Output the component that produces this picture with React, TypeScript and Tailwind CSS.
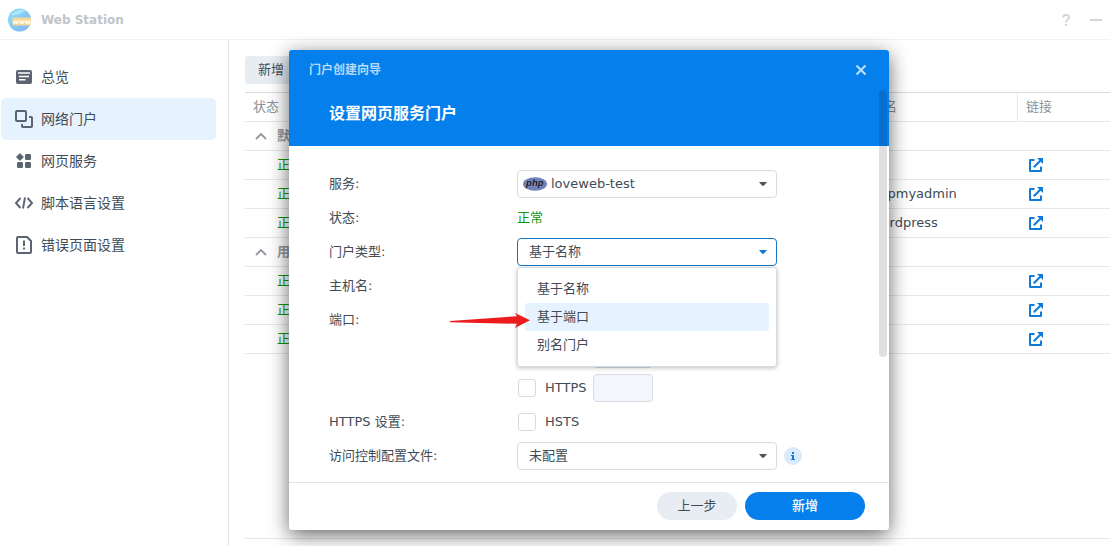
import { useState, type ReactNode } from "react";

type NavItem = { label: string; icon: ReactNode };

const navItems: NavItem[] = [
  { label: "总览", icon: <OverviewIcon /> },
  { label: "网络门户", icon: <PortalIcon /> },
  { label: "网页服务", icon: <ServiceIcon /> },
  { label: "脚本语言设置", icon: <ScriptIcon /> },
  { label: "错误页面设置", icon: <ErrorPageIcon /> },
];

const groups = [
  { name: "默认门户", aliases: ["", "phpmyadmin", "wordpress"] },
  { name: "用户自定义", aliases: ["", "", ""] },
];

const portalTypes = ["基于名称", "基于端口", "别名门户"];

function OverviewIcon() {
  return (
    <svg viewBox="0 0 20 20" className="size-5 shrink-0">
      <rect x="2" y="3" width="16" height="14" rx="2" fill="#5b6470" />
      <path d="M4 6h12M5 9.5h10M5 12.8h6.5" stroke="#fff" strokeWidth="1.4" />
    </svg>
  );
}

function PortalIcon() {
  return (
    <svg viewBox="0 0 20 20" className="size-5 shrink-0" fill="none" stroke="#5b6470" strokeWidth="2">
      <rect x="2" y="2" width="10" height="10" rx="1" />
      <path d="M15 8h2.2a.8.8 0 0 1 .8.8v8.4a.8.8 0 0 1-.8.8H8.8a.8.8 0 0 1-.8-.8V15" />
    </svg>
  );
}

function ServiceIcon() {
  return (
    <svg viewBox="0 0 20 20" className="size-5 shrink-0" fill="#5b6470">
      <path d="M6 2.8 9 6 6 9.2 2.8 6z" stroke="#5b6470" strokeWidth="1.2" strokeLinejoin="round" />
      <rect x="11" y="3" width="6" height="6" rx="1.2" />
      <rect x="3" y="11" width="6" height="6" rx="1.2" />
      <rect x="11" y="11" width="6" height="6" rx="1.2" />
    </svg>
  );
}

function ScriptIcon() {
  return (
    <svg viewBox="0 0 20 20" className="size-5 shrink-0" fill="none" stroke="#5b6470" strokeWidth="1.9">
      <path d="M6.5 5 2 10l4.500 5M13.500 5 18 10l-4.500 5M11 4.500 9 15.500" />
    </svg>
  );
}

function ErrorPageIcon() {
  return (
    <svg viewBox="0 0 20 20" className="size-5 shrink-0" fill="none" stroke="#5b6470" strokeWidth="2">
      <path d="M4 2h9l4 4v11a1 1 0 0 1-1 1H4a1 1 0 0 1-1-1V3a1 1 0 0 1 1-1z" />
      <path d="M10 5.500v5.500M10 12.500v2" />
    </svg>
  );
}

function LaunchIcon() {
  return (
    <svg viewBox="0 0 14 14" className="size-3.5" fill="none" stroke="#0f7ada" strokeWidth="2">
      <path d="M5.500 2H1v11h11V8.500" strokeLinejoin="round" />
      <path d="M4.800 9.200 11.500 2.500" />
      <path d="M8 0h6v6l-2-2-2.200-2.200z" fill="#0f7ada" stroke="none" />
    </svg>
  );
}

function AppLogo() {
  return (
    <svg viewBox="0 0 24 24" className="size-6">
      <defs>
        <linearGradient id="globe" x1="0" y1="0" x2="1" y2="1">
          <stop offset="0" stopColor="#8fe0fa" />
          <stop offset="1" stopColor="#7fb2ec" />
        </linearGradient>
      </defs>
      <circle cx="11.500" cy="12" r="11.500" fill="url(#globe)" />
      <path d="M3 7C6 3 12 1 17 2.500 13 6 8 8 3 7z" fill="#b3ecfc" opacity=".8" />
      <rect x="4.500" y="9.500" width="18.500" height="8" rx="1" fill="#f3d79b" />
      <text x="13.800" y="16" textAnchor="middle" fontSize="6.500" fontWeight="bold" fontFamily="DejaVu Sans" fill="#fff">
        www
      </text>
    </svg>
  );
}

function PhpLogo() {
  return (
    <svg viewBox="0 0 24 14" className="h-3.5 w-6">
      <ellipse cx="12" cy="7" rx="12" ry="6.800" fill="#6f7fb8" />
      <text x="11.800" y="9.200" textAnchor="middle" fontSize="9.500" fontStyle="italic" fontWeight="bold" fontFamily="Liberation Sans" fill="#14161f" stroke="#a3adce" strokeWidth=".6" paintOrder="stroke">
        php
      </text>
    </svg>
  );
}

function Caret({ active = false }: { active?: boolean }) {
  return (
    <svg viewBox="0 0 8 4" className={`pointer-events-none absolute right-2.5 top-3 h-1 w-2 ${active ? "fill-[#0f7ada]" : "fill-[#4d5660]"}`}>
      <path d="M0 0h8L5 3.500Q4 4.300 3 3.500z" />
    </svg>
  );
}

function Field({ label, htmlFor, children }: { label: string; htmlFor?: string; children?: ReactNode }) {
  return (
    <div className="flex h-7 items-center">
      <label htmlFor={htmlFor} className="w-[188px] shrink-0">
        {label}
      </label>
      {children}
    </div>
  );
}

const selectClass = "h-7 w-full appearance-none rounded border bg-white text-[#414b55] outline-none";
const portClass = "h-7 w-[60px] rounded border border-[#d3dce2] bg-[#f4f6fb] px-2";
const checkClass = "ml-px size-[18px] shrink-0 appearance-none rounded-[3px] border border-[#d3dce2] bg-white";

function PortalWizard() {
  const [type, setType] = useState("基于名称");
  return (
    <section
      role="dialog"
      aria-labelledby="wizard-title"
      className="absolute left-[289px] top-[50px] w-[600px] max-w-full rounded-[3px] bg-white shadow-[0_5px_20px_rgba(0,0,0,0.6)]"
    >
      <header className="rounded-t-[3px] bg-[#057feb] pb-4 text-white">
        <div className="flex h-10 items-center justify-between pl-5 pr-[22px]">
          <h2 id="wizard-title" className="text-xs font-bold text-[#b4d9fa]">
            门户创建向导
          </h2>
          <button type="button" aria-label="关闭" className="flex size-3 items-center justify-center">
            <svg viewBox="0 0 12 12" className="size-3" stroke="#b9dcfa" strokeWidth="2.200">
              <path d="M1.500 1.500l9 9M10.500 1.500l-9 9" />
            </svg>
          </button>
        </div>
        <h3 className="h-10 pl-10 text-base font-bold leading-[48px]">设置网页服务门户</h3>
      </header>

      <form className="flex flex-col gap-1.5 px-10 pb-3 pt-6">
        <Field label="服务:" htmlFor="service">
          <div className="relative w-[260px]">
            <select id="service" className={`${selectClass} border-[#d3dce2] pl-[33px]`}>
              <option>loveweb-test</option>
            </select>
            <span className="pointer-events-none absolute left-1.5 top-[7px]">
              <PhpLogo />
            </span>
            <Caret />
          </div>
        </Field>
        <Field label="状态:">
          <span className="text-[#0c980c]">正常</span>
        </Field>
        <Field label="门户类型:" htmlFor="portal-type">
          <div className="relative w-[260px]">
            <select id="portal-type" value={type} onChange={(e) => setType(e.target.value)} className={`${selectClass} border-[#1677c8] pl-[11px]`}>
              {portalTypes.map((t) => (
                <option key={t}>{t}</option>
              ))}
            </select>
            <Caret active />
            <ul role="listbox" aria-label="门户类型" className="absolute inset-x-0 top-[29px] z-10 rounded-[3px] border border-[#d3dce2] bg-white p-[7px] shadow-[0_1px_4px_rgba(0,0,0,0.25)]">
              {portalTypes.map((t) => (
                <li key={t} role="option" aria-selected={t === type}>
                  <button
                    type="button"
                    onClick={() => setType(t)}
                    className={`block h-7 w-full rounded-[3px] pl-3 text-left ${t === "基于端口" ? "bg-[#e6f2fe]" : "bg-white"}`}
                  >
                    {t}
                  </button>
                </li>
              ))}
            </ul>
          </div>
        </Field>
        <Field label="主机名:" htmlFor="host">
          <input id="host" className="h-7 w-[260px] rounded border border-[#d3dce2] px-3" />
        </Field>
        <Field label="端口:" htmlFor="default-port">
          <input id="default-port" type="checkbox" defaultChecked className={checkClass} />
        </Field>
        <div className="flex h-7 items-center gap-[57px] pl-[188px]">
          <input aria-label="HTTP" type="checkbox" className={checkClass} />
          <input aria-label="HTTP 端口" className={portClass} />
        </div>
        <div className="flex h-7 items-center pl-[188px]">
          <input id="https" type="checkbox" className={checkClass} />
          <label htmlFor="https" className="w-[57px] pl-[9px]">HTTPS</label>
          <input aria-label="HTTPS 端口" className={portClass} />
        </div>
        <div className="flex h-7 items-center">
          <span className="w-[188px]">HTTPS 设置:</span>
          <input id="hsts" type="checkbox" className={checkClass} />
          <label htmlFor="hsts" className="pl-[9px]">HSTS</label>
        </div>
        <Field label="访问控制配置文件:" htmlFor="acl">
          <div className="relative w-[260px]">
            <select id="acl" className={`${selectClass} border-[#d3dce2] pl-[11px]`}>
              <option>未配置</option>
            </select>
            <Caret />
          </div>
          <button type="button" aria-label="信息" className="ml-[7px] flex size-[18px] items-center justify-center rounded-full bg-[#d8eafb]">
            <svg viewBox="0 0 4 8" className="h-2 w-1" fill="#0f7ada">
              <path d="M1 0h2v2H1zM0 3h3v4h1v1H0V7h1V4H0z" />
            </svg>
          </button>
        </Field>
      </form>

      <footer className="flex justify-end gap-2 border-t border-[#dde4ea] px-6 pb-2.5 pt-[9px]">
        <button type="button" className="h-7 w-20 rounded-full bg-[#e8edf4]">上一步</button>
        <button type="button" className="h-7 w-[120px] rounded-full bg-[#057feb] font-medium text-white">新增</button>
      </footer>
      <div className="absolute right-0.5 top-10 h-[267px] w-2 rounded-full bg-black/12" />
      <svg viewBox="0 0 80 16" className="pointer-events-none absolute left-[161px] top-[262px] z-20 h-4 w-20" fill="#ec1c1c">
        <path d="M0 9 67 4.200 65 1 80 8.200 65 16l2-4.200L0 10.200z" />
      </svg>
    </section>
  );
}

export default function App() {
  return (
    <div className="relative flex min-h-screen flex-col overflow-hidden bg-white font-['DejaVu_Sans','Noto_Sans_CJK_SC',sans-serif] text-[13px] leading-5 text-[#414b55]">
      <header className="flex h-10 items-center justify-between border-b border-[#f0f2f4] px-2">
        <div className="flex items-center gap-[9px]">
          <AppLogo />
          <h1 className="text-xs font-bold text-[#c0c4c9]">Web Station</h1>
        </div>
        <div className="flex items-center gap-5 text-[#d0d4da]">
          <button type="button" aria-label="帮助" className="h-3 w-2">
            <svg viewBox="0 0 8 12" className="h-3 w-2" fill="none" stroke="#d0d4da" strokeWidth="1.800">
              <path d="M1 3.500C1 1.800 2.200 1 4 1s3 .9 3 2.500C7 5.600 4 5.600 4 8.500M4 10v2" />
            </svg>
          </button>
          <button type="button" aria-label="最小化" className="h-0.5 w-3 bg-[#d3d7dd]" />
        </div>
      </header>

      <div className="flex grow">
        <nav className="w-[229px] shrink-0 border-r border-[#dde6ec] pl-px pr-3 pt-4 text-sm">
          {navItems.map((item, i) => (
            <a
              key={item.label}
              href="#"
              className={`flex h-[42px] items-center gap-[7px] rounded-[5px] pl-[13px] ${i === 1 ? "bg-[#e6f2fe]" : ""}`}
            >
              {item.icon}
              {item.label}
            </a>
          ))}
        </nav>

        <main className="flex min-w-0 grow flex-col pl-4 pt-4">
          <button type="button" className="h-7 w-20 rounded-[3px] bg-[#e8edf4] pl-[13px] text-left">新增</button>
          <table className="mt-2 w-full table-fixed border-separate border-spacing-0 border-t border-[#d3dde6] text-left">
            <colgroup>
              <col className="w-[618px]" />
              <col className="w-[154px]" />
              <col />
            </colgroup>
            <thead>
              <tr className="h-[29px] text-[#8c9299] [&>th]:border-b [&>th]:border-[#e4e9ef] [&>th]:p-0 [&>th]:pl-2 [&>th]:font-normal">
                <th>状态</th>
                <th>别名</th>
                <th className="border-l">链接</th>
              </tr>
            </thead>
            {groups.map((group) => (
              <tbody key={group.name} className="[&_td]:border-b [&_td]:border-[#e4e9ef] [&_td]:p-0">
                <tr className="h-[29px]">
                  <td colSpan={3}>
                    <button type="button" className="flex items-center gap-2.5 pl-2.5 font-bold text-[#9298a0]">
                      <svg viewBox="0 0 12 8" className="h-2 w-3" fill="none" stroke="#9298a0" strokeWidth="1.800">
                        <path d="M1 7l5-5 5 5" />
                      </svg>
                      {group.name}
                    </button>
                  </td>
                </tr>
                {group.aliases.map((alias, i) => (
                  <tr key={i} className="h-[29px]">
                    <td>
                      <span className="pl-8 text-[#0c980c]">正常</span>
                    </td>
                    <td>
                      <span className="pl-2">{alias}</span>
                    </td>
                    <td>
                      <a href="#" aria-label="打开链接" className="ml-3 flex w-3.5">
                        <LaunchIcon />
                      </a>
                    </td>
                  </tr>
                ))}
              </tbody>
            ))}
          </table>
          <div className="mt-auto h-2 border-t border-[#e4e9ef]" />
        </main>
      </div>

      <PortalWizard />
    </div>
  );
}
